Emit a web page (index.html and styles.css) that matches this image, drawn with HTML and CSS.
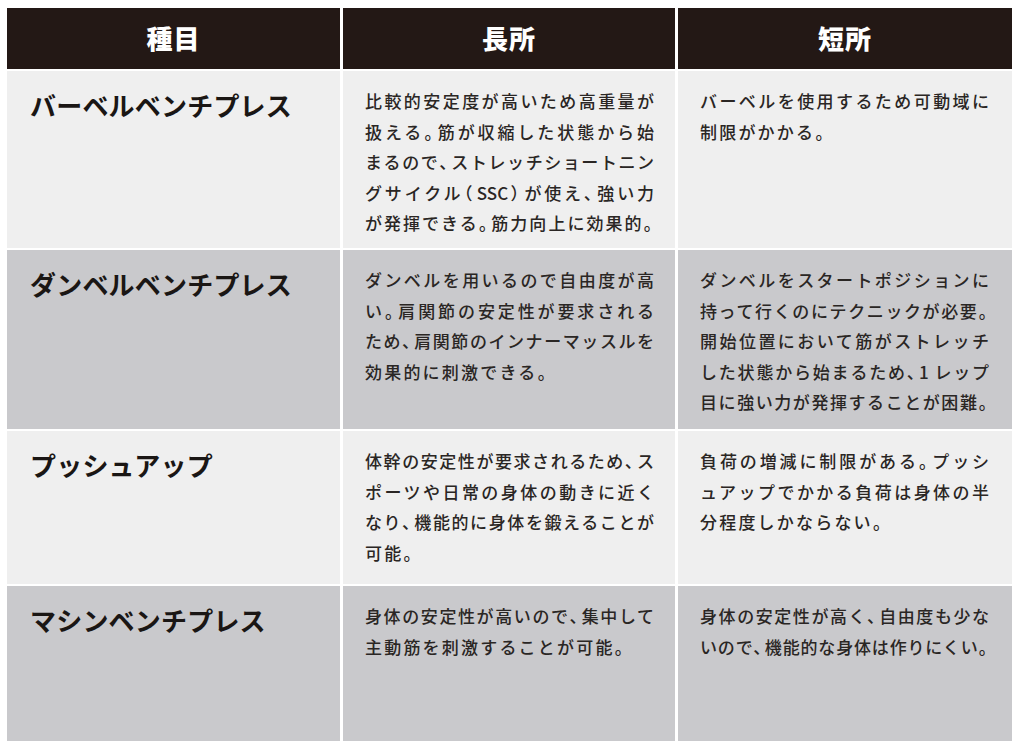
FILE: index.html
```html
<!DOCTYPE html>
<html lang="ja">
<head>
<meta charset="utf-8">
<title>ベンチプレス種目比較</title>
<link rel="stylesheet" href="styles.css">
</head>
<body>
<div class="table">
  <div class="th">種目</div>
  <div class="th">長所</div>
  <div class="th">短所</div>

  <div class="cell name light">バーベルベンチプレス</div>
  <div class="cell text light">
    <span class="ln">比較的安定度が高いため高重量が</span>
    <span class="ln">扱える<span class="p">。</span>筋が収縮した状態から始</span>
    <span class="ln">まるので<span class="p">、</span>ストレッチショートニン</span>
    <span class="ln">グサイクル<span class="p">（</span>SSC<span class="p">）</span>が使え<span class="p">、</span>強い力</span>
    <span class="ln">が発揮できる<span class="p">。</span>筋力向上に効果的<span class="p">。</span></span>
  </div>
  <div class="cell text light">
    <span class="ln">バーベルを使用するため可動域に</span>
    <span class="ln end">制限がかかる<span class="p">。</span></span>
  </div>

  <div class="cell name dark">ダンベルベンチプレス</div>
  <div class="cell text dark">
    <span class="ln">ダンベルを用いるので自由度が高</span>
    <span class="ln">い<span class="p">。</span>肩関節の安定性が要求される</span>
    <span class="ln">ため<span class="p">、</span>肩関節のインナーマッスルを</span>
    <span class="ln end">効果的に刺激できる<span class="p">。</span></span>
  </div>
  <div class="cell text dark">
    <span class="ln">ダンベルをスタートポジションに</span>
    <span class="ln">持って行くのにテクニックが必要<span class="p">。</span></span>
    <span class="ln">開始位置において筋がストレッチ</span>
    <span class="ln">した状態から始まるため<span class="p">、</span>1 レップ</span>
    <span class="ln">目に強い力が発揮することが困難<span class="p">。</span></span>
  </div>

  <div class="cell name light">プッシュアップ</div>
  <div class="cell text light">
    <span class="ln">体幹の安定性が要求されるため<span class="p">、</span>ス</span>
    <span class="ln">ポーツや日常の身体の動きに近く</span>
    <span class="ln">なり<span class="p">、</span>機能的に身体を鍛えることが</span>
    <span class="ln end">可能<span class="p">。</span></span>
  </div>
  <div class="cell text light">
    <span class="ln">負荷の増減に制限がある<span class="p">。</span>プッシ</span>
    <span class="ln">ュアップでかかる負荷は身体の半</span>
    <span class="ln end">分程度しかならない<span class="p">。</span></span>
  </div>

  <div class="cell name dark">マシンベンチプレス</div>
  <div class="cell text dark">
    <span class="ln">身体の安定性が高いので<span class="p">、</span>集中して</span>
    <span class="ln end">主動筋を刺激することが可能<span class="p">。</span></span>
  </div>
  <div class="cell text dark">
    <span class="ln">身体の安定性が高く<span class="p">、</span>自由度も少な</span>
    <span class="ln">いので<span class="p">、</span>機能的な身体は作りにくい<span class="p">。</span></span>
  </div>
</div>
</body>
</html>
```

FILE: styles.css
```css
html, body {
  margin: 0;
  padding: 0;
  background: #ffffff;
}

body {
  font-family: "Noto Sans CJK JP", "Noto Sans", sans-serif;
  color: #231815;
}

.table {
  display: grid;
  grid-template-columns: 333px 332px 334px;
  grid-template-rows: 61px 177px 179px 153px 155px;
  column-gap: 3px;
  row-gap: 2px;
  margin: 8px 0 0 7px;
  width: 1005px;
}

.th {
  background: #231815;
  color: #ffffff;
  font-size: 26px;
  font-weight: 900;
  letter-spacing: 1px;
  display: flex;
  align-items: center;
  justify-content: center;
  padding-bottom: 2px;
}

.cell {
  box-sizing: border-box;
}

.light {
  background: #efefef;
}

.dark {
  background: #c9c9cc;
}

.name {
  padding: 19px 0 0 23px;
  font-size: 26px;
  font-weight: 700;
  line-height: 30px;
  color: #1a1614;
  letter-spacing: 0.2px;
}

.text {
  padding: 15px 0 0 22px;
  font-size: 17px;
  font-weight: 500;
  line-height: 30.5px;
  color: #2a2624;
}

.ln {
  display: block;
  width: 289px;
  white-space: nowrap;
  text-align: justify;
  text-align-last: justify;
  text-justify: inter-character;
}

.ln.end {
  text-align-last: left;
  letter-spacing: 2.2px;
}

.p {
  font-feature-settings: "palt";
  letter-spacing: 2px;
}
```
